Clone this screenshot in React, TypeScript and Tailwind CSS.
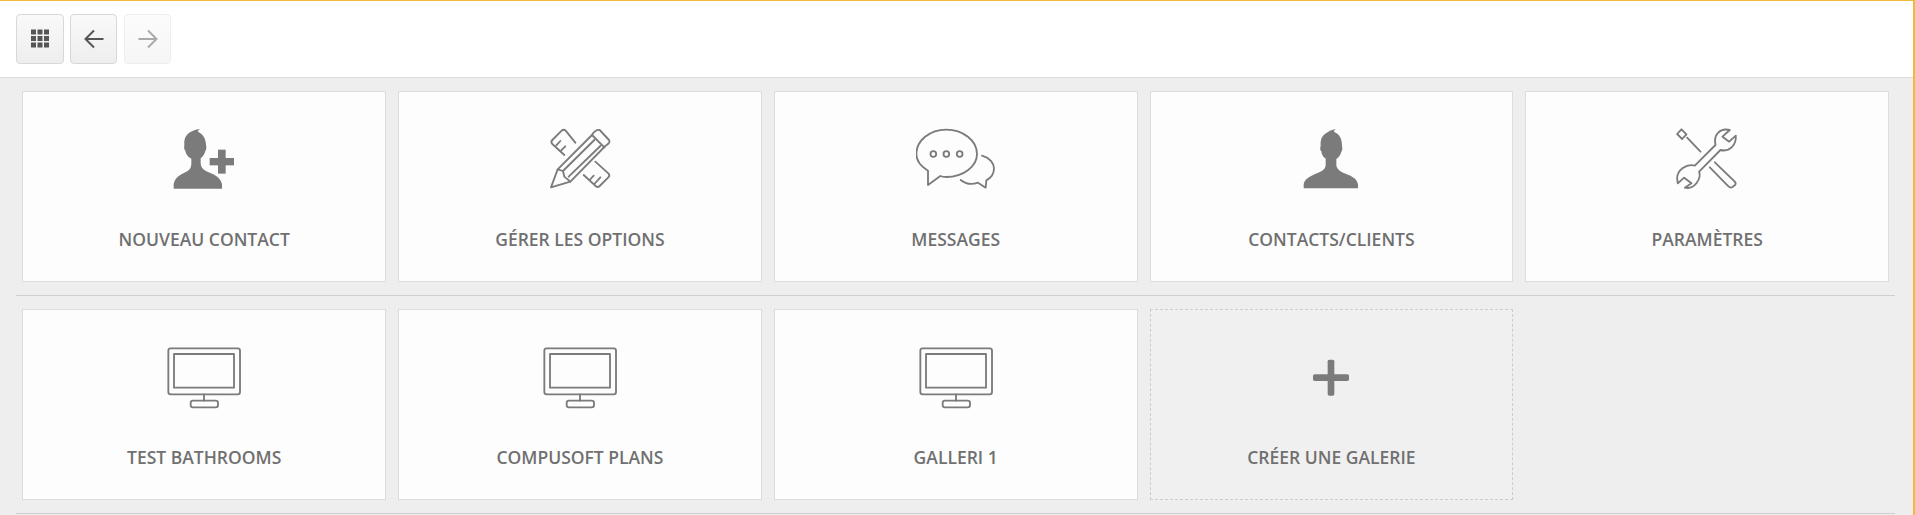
import React from "react";

const STROKE = "#7b7b7b";

function IconBox({ children }: { children: React.ReactNode }) {
  return (
    <svg viewBox="0 0 240 240" className="w-20 h-20" fill="none" stroke={STROKE} strokeWidth={5.5} strokeLinejoin="round" strokeLinecap="round">
      {children}
    </svg>
  );
}

const PERSON =
  "M42 220 L42 208 C44 192 62 183 78 176 C96 170 107 164 108 150 L108 131 C100 126 96 118 95 109 C91 106 91 98 93 92 C92 72 97 62 110 54 C118 49 126 44 138 42 C133 46 131 50 135 52 C148 57 157 70 157 92 C159 100 158 107 155 110 C153 119 147 127 140 132 L140 150 C141 164 154 171 170 177 C188 184 202 192 205 208 L205 220 Z";

function AddContactIcon() {
  return (
    <IconBox>
      <path
        d="M521 566 L521 552 C524 535 540 524 556 517 C568 511 574 505 574 490 L574 476 C563 470 558 462 556 452 C552 449 552 440 553 434 C552 415 558 405 570 397 C578 392 586 389 600 387 C594 391 592 395 596 397 C608 402 617 415 618 434 C620 442 619 450 616 453 C614 462 608 470 602 475 L602 490 C603 505 612 511 626 517 C645 524 662 535 666 552 L666 566 Z"
        transform="translate(-492 -357)"
        fill={STROKE}
        stroke="none"
      />
      <rect x="137" y="117" width="73" height="22" fill={STROKE} stroke="none" />
      <rect x="162" y="92" width="23" height="72" fill={STROKE} stroke="none" />
    </IconBox>
  );
}

function OptionsIcon() {
  return (
    <IconBox>
      <g transform="translate(-59 -27)">
        <path d="M165 98 L136 62 Q130 56 124 62 L96 90 Q90 96 96 102 L132 135" />
        <path d="M108 106 L120 93 M122 122 L135 109" />
        <path d="M225 155 L264 190 Q270 196 264 202 L238 228 Q232 234 226 228 L190 195" />
        <path d="M208 210 L220 197 M222 222 L240 202" />
        <path d="M92 232 L112 178 L215 75 Q225 58 238 60 L266 90 Q272 98 255 108 L150 215 Z" />
        <path d="M128 183 L222 90 M145 200 L240 108 M215 75 L252 112" />
        <path d="M112 178 L128 183 L132 200 L150 215" />
      </g>
    </IconBox>
  );
}

function MessagesIcon() {
  return (
    <IconBox>
      <g transform="translate(-49 -12)">
        <path d="M85 167 C60 152 50 135 50 117 C50 77 90 44 140 44 C190 44 232 77 232 117 C232 155 190 186 140 186 C132 186 126 185 122 183 L85 210 Z" />
        <circle cx="101" cy="117" r="8.5" />
        <circle cx="140" cy="117" r="8.5" />
        <circle cx="180" cy="117" r="8.5" />
        <path d="M247 122 C270 128 283 145 283 160 C283 178 272 190 260 196 L258 218 L235 203 C215 210 195 205 183 195" />
      </g>
    </IconBox>
  );
}

function ContactsIcon() {
  return (
    <IconBox>
      <path d={PERSON} transform="translate(-4 -12)" fill={STROKE} stroke="none" />
    </IconBox>
  );
}

function SettingsIcon() {
  return (
    <IconBox>
      <g transform="translate(8.4 -12)">
        <path d="M35 43 L22 57 L37 72 L50 58 Z" />
        <path d="M52 68 L92 110" />
        <path d="M135 142 L195 200 Q200 206 195 211 L188 216 Q182 220 176 214 L120 157" />
        <path d="M180 45 C150 38 130 60 137 90 L75 152 C50 145 22 165 22 190 L24 205 L43 188 L65 205 L45 218 C75 225 95 190 88 170 L152 105 C180 112 200 90 198 62 L178 80 L158 65 Z" />
      </g>
    </IconBox>
  );
}

function MonitorIcon() {
  return (
    <IconBox>
      <g transform="translate(-42 -6)">
        <rect x="55" y="40" width="215" height="138" rx="7" />
        <rect x="72" y="57" width="180" height="101" />
        <path d="M162 178 L162 197" />
        <rect x="122" y="197" width="82" height="20" rx="7" />
      </g>
    </IconBox>
  );
}

function PlusIcon() {
  return (
    <IconBox>
      <rect x="66" y="112" width="108" height="20" rx="5" fill={STROKE} stroke="none" />
      <rect x="110" y="68" width="20" height="108" rx="5" fill={STROKE} stroke="none" />
    </IconBox>
  );
}

function Tile({ label, icon, dashed }: { label: string; icon: React.ReactNode; dashed?: boolean }) {
  return (
    <div
      className={
        dashed
          ? "h-[191px] flex flex-col items-center pt-[27px] border border-dashed border-[#cccccc] bg-[#f0f0f0]"
          : "h-[191px] flex flex-col items-center pt-[27px] border border-[#dddddd] bg-[#fdfdfd]"
      }
    >
      {icon}
      <span className="mt-[29px] text-[17.5px] leading-[22px] font-semibold text-[#707070]">{label}</span>
    </div>
  );
}

export default function App() {
  return (
    <div className="h-screen overflow-hidden bg-[#eeeeee] border-t border-r-2 border-[#f0b93a] font-['Open_Sans',sans-serif]">
      <div className="h-[77px] bg-white border-b border-[#dddddd] pt-[13px] pl-4 flex gap-[6px] items-start">
        <button className="w-12 h-[50px] flex items-center justify-center rounded border border-[#d8d8d8] bg-gradient-to-b from-[#f9f9f9] to-[#eeeeee]">
          <svg width="20" height="20" viewBox="0 0 20 20" fill="#565656">
            <rect x="1" y="0.5" width="5" height="5" />
            <rect x="7.5" y="0.5" width="5" height="5" />
            <rect x="14" y="0.5" width="5" height="5" />
            <rect x="1" y="7" width="5" height="5" />
            <rect x="7.5" y="7" width="5" height="5" />
            <rect x="14" y="7" width="5" height="5" />
            <rect x="1" y="13.5" width="5" height="5" />
            <rect x="7.5" y="13.5" width="5" height="5" />
            <rect x="14" y="13.5" width="5" height="5" />
          </svg>
        </button>
        <button className="w-[47px] h-[50px] flex items-center justify-center rounded border border-[#d8d8d8] bg-gradient-to-b from-[#f9f9f9] to-[#eeeeee]">
          <svg width="22" height="22" viewBox="0 0 22 22" fill="none" stroke="#555555" strokeWidth="2">
            <path d="M20.5 11 H2.5 M11 2.5 L2.5 11 L11 19.5" />
          </svg>
        </button>
        <button className="ml-px w-[47px] h-[50px] flex items-center justify-center rounded border border-[#eeeeee] bg-gradient-to-b from-[#fcfcfc] to-[#f6f6f6]">
          <svg width="22" height="22" viewBox="0 0 22 22" fill="none" stroke="#aaaaaa" strokeWidth="2">
            <path d="M1.5 11 H19.5 M11 2.5 L19.5 11 L11 19.5" />
          </svg>
        </button>
      </div>
      <div className="pl-4 pr-[18px]">
        <div className="grid grid-cols-5 gap-x-3 pl-[6.3px] pr-[5.95px] py-[13px] border-b border-[#cfcfcf]">
          <Tile label="NOUVEAU CONTACT" icon={<AddContactIcon />} />
          <Tile label="GÉRER LES OPTIONS" icon={<OptionsIcon />} />
          <Tile label="MESSAGES" icon={<MessagesIcon />} />
          <Tile label="CONTACTS/CLIENTS" icon={<ContactsIcon />} />
          <Tile label="PARAMÈTRES" icon={<SettingsIcon />} />
        </div>
        <div className="grid grid-cols-5 gap-x-3 pl-[6.3px] pr-[5.95px] py-[13px] border-b border-[#cfcfcf]">
          <Tile label="TEST BATHROOMS" icon={<MonitorIcon />} />
          <Tile label="COMPUSOFT PLANS" icon={<MonitorIcon />} />
          <Tile label="GALLERI 1" icon={<MonitorIcon />} />
          <Tile label="CRÉER UNE GALERIE" icon={<PlusIcon />} dashed />
        </div>
      </div>
    </div>
  );
}
